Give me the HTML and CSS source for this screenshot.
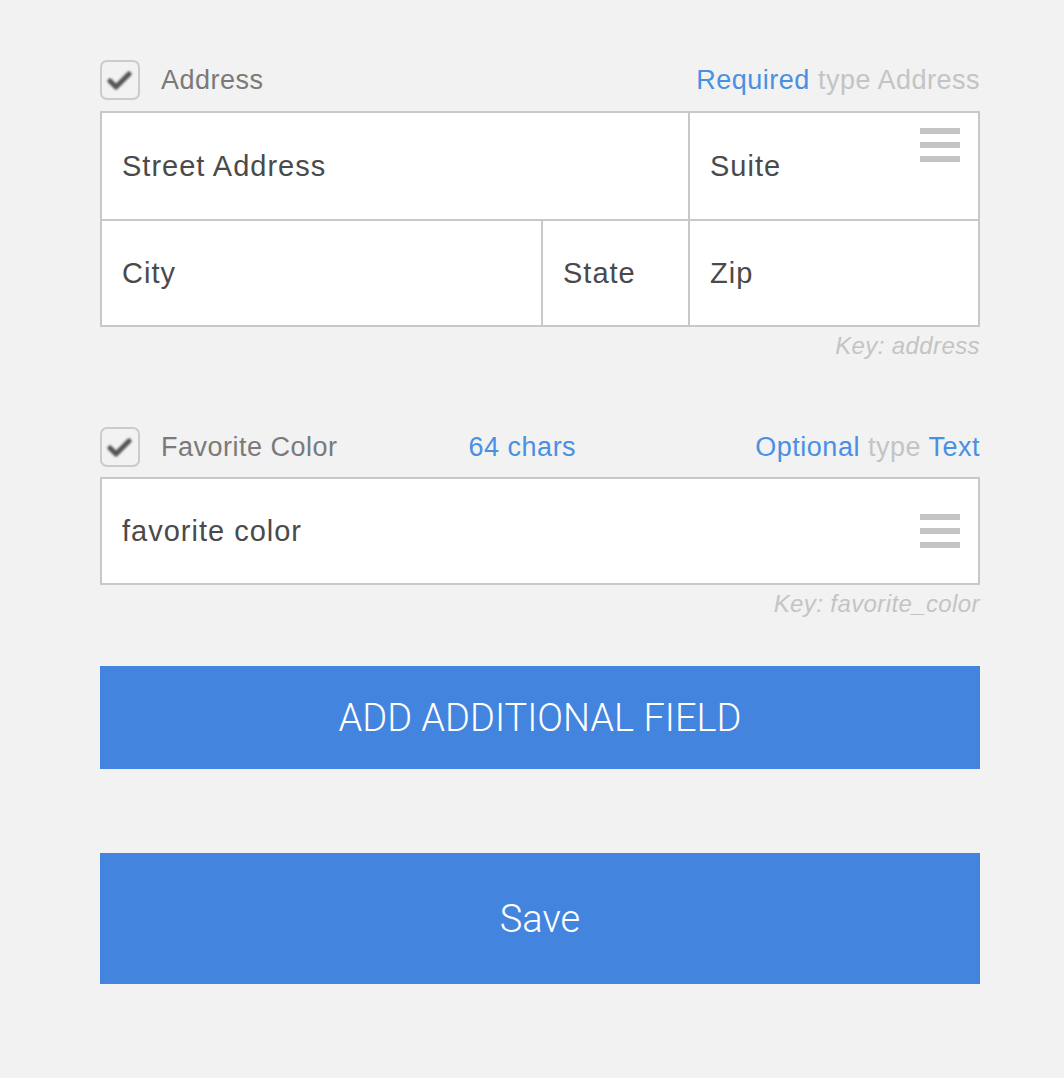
FILE: index.html
```html
<!DOCTYPE html>
<html lang="en">
<head>
<meta charset="UTF-8">
<meta name="viewport" content="width=device-width, initial-scale=1.0">
<title>Form fields</title>
<link rel="stylesheet" href="styles.css">
</head>
<body>
    <div class="form">
        <div class="field">
            <div class="field-header">
                <span class="check">
                    <svg width="40" height="40" viewBox="0 0 40 40"><path d="M10 21 L16 27 L29 14" /></svg>
                </span>
                <span class="field-label">Address</span>
                <span class="field-meta"><span class="blue">Required</span> type Address</span>
            </div>
            <div class="address-grid">
                <div class="cell street">
                    <span>Street Address</span>
                </div>
                <div class="cell suite">
                    <span>Suite</span>
                    <span class="handle top"><i></i><i></i><i></i></span>
                </div>
                <div class="cell">
                    <span>City</span>
                </div>
                <div class="cell">
                    <span>State</span>
                </div>
                <div class="cell">
                    <span>Zip</span>
                </div>
            </div>
            <div class="field-key">Key: address</div>
        </div>

        <div class="field">
            <div class="field-header">
                <span class="check">
                    <svg width="40" height="40" viewBox="0 0 40 40"><path d="M10 21 L16 27 L29 14" /></svg>
                </span>
                <span class="field-label">Favorite Color</span>
                <span class="field-chars">64 chars</span>
                <span class="field-meta"><span class="blue">Optional</span> type <span class="blue">Text</span></span>
            </div>
            <div class="text-input">
                <span>favorite color</span>
                <span class="handle"><i></i><i></i><i></i></span>
            </div>
            <div class="field-key">Key: favorite_color</div>
        </div>

        <button class="btn add-btn">ADD ADDITIONAL FIELD</button>
        <button class="btn save-btn">Save</button>
    </div>
</body>
</html>
```

FILE: styles.css
```css
body {
    margin: 0;
    background: #f2f2f2;
    font-family: "Liberation Sans", Arial, sans-serif;
}
.form {
    width: 880px;
    margin-left: 100px;
    padding-top: 60px;
    padding-bottom: 60px;
}
.field-header {
    display: flex;
    align-items: center;
    height: 40px;
    font-size: 27px;
    letter-spacing: 0.5px;
}
.check {
    width: 36px;
    height: 36px;
    border: 2px solid #cbcbcb;
    border-radius: 7px;
    display: flex;
    align-items: center;
    justify-content: center;
    overflow: hidden;
}
.check svg {
    flex: none;
}
.check path {
    fill: none;
    stroke: #555;
    stroke-width: 5;
    stroke-linecap: round;
    stroke-linejoin: round;
    filter: blur(0.8px);
}
.field-label {
    margin-left: 21px;
    color: #7a7a7a;
}
.field-chars {
    margin-left: 131px;
    color: #4a90e2;
}
.field-meta {
    margin-left: auto;
    color: #c4c4c4;
}
.blue {
    color: #4a90e2;
}
.address-grid {
    margin-top: 11px;
    display: grid;
    grid-template-columns: 439px 145px 288px;
    grid-template-rows: 106px 104px;
    gap: 2px;
    padding: 2px;
    background: #c8c8c8;
}
.cell {
    background: #fff;
    display: flex;
    align-items: center;
    padding-left: 20px;
    font-size: 29px;
    letter-spacing: 1px;
    color: #4a4a4a;
}
.street {
    grid-column: span 2;
}
.suite {
    justify-content: space-between;
    padding-right: 18px;
}
.handle {
    display: flex;
    flex-direction: column;
    gap: 8px;
    width: 40px;
}
.handle.top {
    align-self: flex-start;
    margin-top: 15px;
}
.handle i {
    display: block;
    height: 6px;
    background: #c4c4c4;
}
.field-key {
    margin-top: 4px;
    text-align: right;
    font-size: 24px;
    letter-spacing: 0.4px;
    line-height: 30px;
    font-style: italic;
    color: #c4c4c4;
}
.field + .field {
    margin-top: 66px;
}
.text-input {
    margin-top: 10px;
    height: 104px;
    background: #fff;
    border: 2px solid #c8c8c8;
    display: flex;
    align-items: center;
    justify-content: space-between;
    padding: 0 18px 0 20px;
    font-size: 29px;
    letter-spacing: 1px;
    color: #4a4a4a;
}
.btn {
    display: block;
    width: 100%;
    border: none;
    background: #4385de;
    color: #fff;
    font-family: Roboto, "Liberation Sans", sans-serif;
    font-weight: 300;
    font-size: 38px;
    cursor: pointer;
}
.add-btn {
    margin-top: 47px;
    height: 103px;
}
.save-btn {
    margin-top: 84px;
    height: 131px;
}
```
